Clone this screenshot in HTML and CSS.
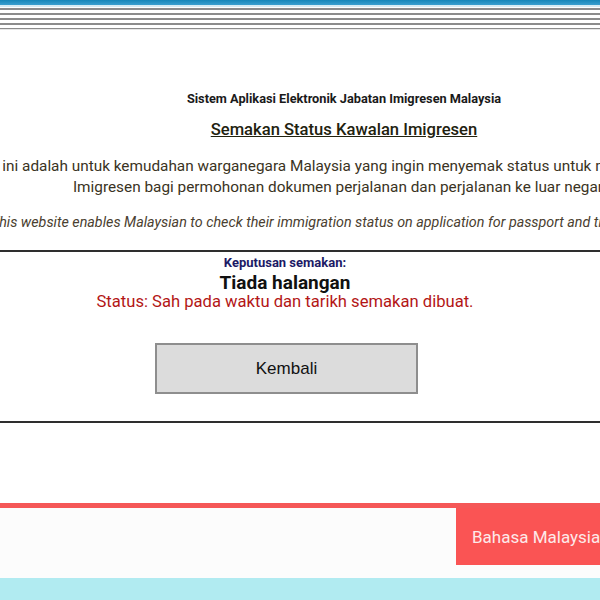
FILE: index.html
```html
<!DOCTYPE html>
<html>
<head>
  <meta charset="utf-8">
  <title>Semakan Status Kawalan Imigresen</title>
  <link rel="stylesheet" href="styles.css">
</head>
<body>
  <div class="top-bar">
    <div class="blue-line"></div>
    <div class="stripes"></div>
  </div>

  <div class="header">
    <h3>Sistem Aplikasi Elektronik Jabatan Imigresen Malaysia</h3>
    <h2>Semakan Status Kawalan Imigresen</h2>
    <p class="intro">
      Laman ini adalah untuk kemudahan warganegara Malaysia yang ingin menyemak status untuk mengetahui kawalan<br>
      Imigresen bagi permohonan dokumen perjalanan dan perjalanan ke luar negara.
    </p>
    <p class="intro-en">This website enables Malaysian to check their immigration status on application for passport and travel document.</p>
  </div>

  <div class="result">
    <div class="result-label">Keputusan semakan:</div>
    <div class="result-value">Tiada halangan</div>
    <div class="result-status">Status: Sah pada waktu dan tarikh semakan dibuat.</div>
    <button class="btn-back">Kembali</button>
  </div>

  <div class="footer">
    <div class="lang-bar">
      <a class="lang-btn">Bahasa Malaysia</a>
    </div>
    <div class="footer-band"></div>
  </div>
</body>
</html>
```

FILE: styles.css
```css
body {
  font-family: Roboto, "Noto Sans", sans-serif;
  margin: 0;
  width: 600px;
  height: 600px;
  overflow: hidden;
  background: white;
  color: #222;
}

.top-bar {
  height: 30px;
}

.blue-line {
  height: 5px;
  background: linear-gradient(#1686b8, #3a9fcf);
  border-bottom: 2px solid #d6ecf4;
}

.stripes {
  height: 23px;
  background: repeating-linear-gradient(#ffffff 0, #ffffff 1px, #8c8c8c 1px, #8c8c8c 3px, #ffffff 3px, #ffffff 5px);
  border-bottom: 1px solid #e6e6e6;
  box-sizing: border-box;
}

/* page is wider than the window, centre sits at x=344 */
.header {
  width: 1000px;
  margin-left: -156px;
  text-align: center;
  white-space: nowrap;
}

.header h3 {
  margin: 61px 0 0 0;
  font-size: 12.75px;
  line-height: 16px;
  font-weight: 700;
  color: #1a1a1a;
}

.header h2 {
  margin: 13px 0 0 0;
  font-size: 16.6px;
  line-height: 20px;
  font-weight: 500;
  color: #22220f;
  text-decoration: underline;
}

.intro {
  margin: 16px 0 0 0;
  font-size: 15.35px;
  line-height: 21px;
  color: #3a3323;
}

.intro-en {
  margin: 15px 0 0 0;
  font-size: 14.3px;
  line-height: 18px;
  font-style: italic;
  color: #4a4030;
}

.result {
  width: 700px;
  margin: 19px 0 0 -65px;
  border-top: 2px solid #2e2e2e;
  border-bottom: 2px solid #2e2e2e;
  padding: 3px 0 27px 0;
  text-align: center;
}

.result-label {
  font-size: 13px;
  line-height: 16px;
  font-weight: 700;
  color: #1c1a66;
}

.result-value {
  margin-top: 2px;
  font-size: 19px;
  line-height: 20px;
  font-weight: 700;
  color: #111;
}

.result-status {
  font-size: 16.6px;
  line-height: 18px;
  color: #b31616;
}

.btn-back {
  display: block;
  margin: 32px 0 0 220px;
  width: 263px;
  height: 51px;
  background: #dcdcdc;
  border: 2px solid #8e8e8e;
  font-family: "Liberation Sans", Arial, sans-serif;
  font-size: 17px;
  color: #111;
}

.footer {
  margin-top: 80px;
}

.lang-bar {
  display: flex;
  height: 75px;
  border-top: 5px solid #f55757;
  background: #fcfcfc;
  box-sizing: border-box;
}

.lang-btn {
  margin-left: 456px;
  height: 57px;
  padding: 0 16px;
  display: flex;
  align-items: center;
  background: #fa5454;
  color: #fde9e9;
  font-size: 17px;
  white-space: nowrap;
}

.footer-band {
  height: 30px;
  background: #b1ebf1;
}
```
